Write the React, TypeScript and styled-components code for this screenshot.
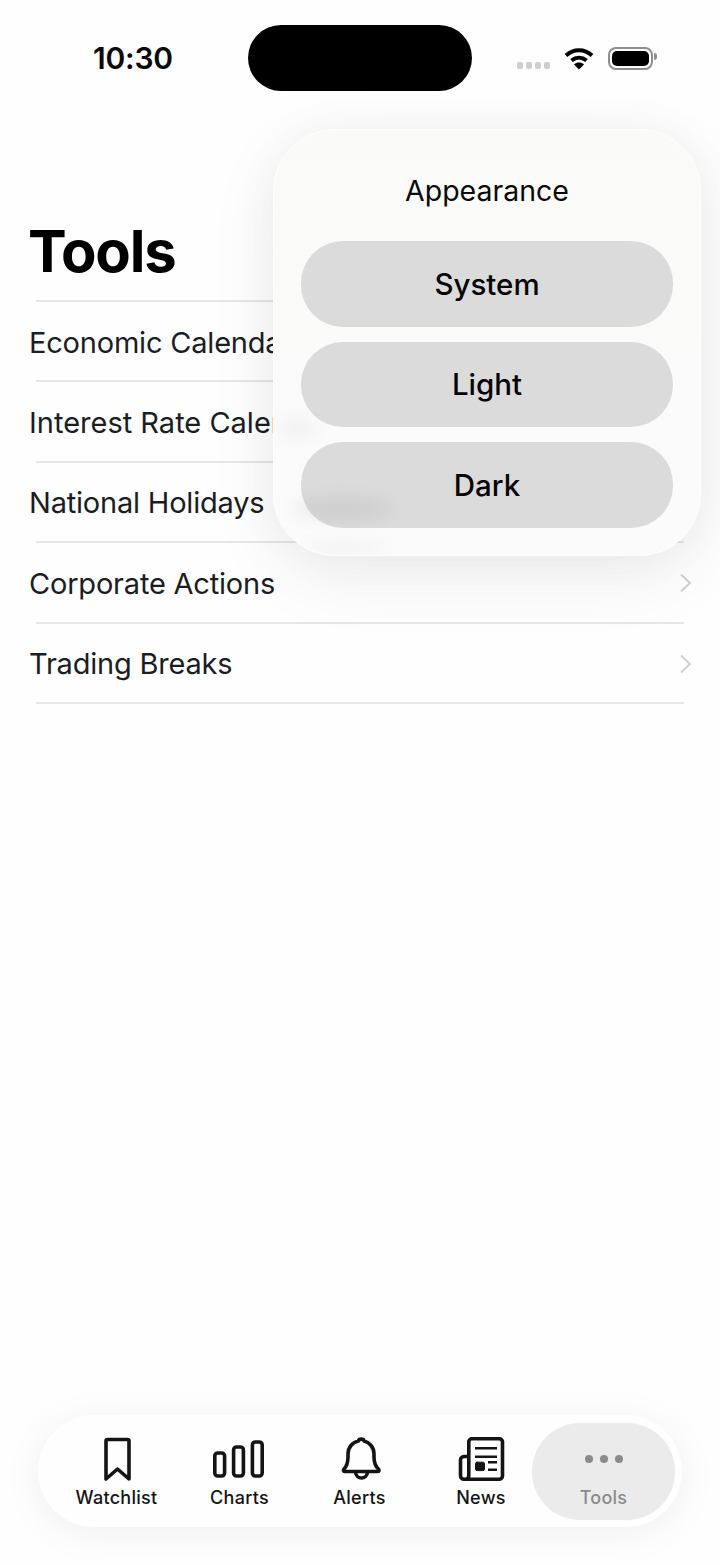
import React from 'react';
import styled, { createGlobalStyle } from 'styled-components';

const GlobalStyle = createGlobalStyle`
  html, body {
    margin: 0;
    padding: 0;
    background: #fefefe;
    font-family: Inter, "Liberation Sans", sans-serif;
  }
  * {
    box-sizing: border-box;
  }
`;

const Screen = styled.div`
  position: relative;
  width: 720px;
  height: 1565px;
  display: flex;
  flex-direction: column;
  overflow: hidden;
  background: #fefefe;
`;

const StatusBar = styled.div`
  display: grid;
  grid-template-columns: 1fr 224px 1fr;
  align-items: center;
  height: 66px;
  margin-top: 25px;
`;

const Clock = styled.div`
  padding-left: 93px;
  font-size: 30px;
  font-weight: 600;
  color: #0a0a0a;
  letter-spacing: -0.2px;
`;

const Island = styled.div`
  height: 66px;
  border-radius: 33px;
  background: #000;
`;

const StatusIcons = styled.div`
  display: flex;
  align-items: center;
  padding-left: 45px;
`;

const SignalDots = styled.div`
  display: flex;
  gap: 3px;
  margin-top: 15px;
  margin-right: 14px;
`;

const SignalDot = styled.span`
  width: 6px;
  height: 7px;
  border-radius: 2px;
  background: #cfcfcf;
`;

const Battery = styled.div`
  position: relative;
  width: 45px;
  height: 23px;
  margin-left: 14px;
  padding: 2px;
  border: 2px solid #8e8e8e;
  border-radius: 8px;

  &::before {
    content: '';
    display: block;
    width: 100%;
    height: 100%;
    background: #000;
    border-radius: 5px;
  }

  &::after {
    content: '';
    position: absolute;
    top: 4px;
    right: -6px;
    width: 3px;
    height: 7px;
    background: #8e8e8e;
    border-radius: 0 3px 3px 0;
  }
`;

const Title = styled.h1`
  margin: 0;
  padding: 125px 28px 0;
  font-size: 58px;
  line-height: 70px;
  font-weight: 700;
  letter-spacing: -1.2px;
  color: #000;
`;

const List = styled.div`
  display: flex;
  flex-direction: column;
  margin-top: 14px;
`;

const Row = styled.div`
  display: flex;
  align-items: center;
  justify-content: space-between;
  position: relative;
  height: 80.4px;
  padding: 4px 28px 0 29px;
  font-size: 29px;
  letter-spacing: -0.2px;
  color: #1c1c24;

  &:nth-child(2) {
    letter-spacing: 0;
  }

  &::before {
    content: '';
    position: absolute;
    top: 0;
    left: 36px;
    right: 36px;
    height: 2px;
    background: #e6e6e6;
  }
`;

const EndRule = styled.div`
  height: 2px;
  margin: 0 36px;
  background: #e6e6e6;
`;

const Popover = styled.div`
  position: absolute;
  top: 129px;
  left: 273px;
  width: 428px;
  height: 427px;
  padding: 0 27px;
  display: flex;
  flex-direction: column;
  border: 1px solid #fefefe;
  border-radius: 62px;
  background: linear-gradient(#fafaf9, #fbfbfb);
  box-shadow: 0 20px 70px rgba(0, 0, 0, 0.07), 0 0 50px rgba(0, 0, 0, 0.035);
  overflow: hidden;
`;

const PopoverTitle = styled.div`
  height: 111px;
  padding-top: 43px;
  font-size: 28.5px;
  line-height: 36px;
  text-align: center;
  color: #0a0a0a;
`;

const OptionList = styled.div`
  position: relative;
  display: flex;
  flex-direction: column;
  gap: 15px;
`;

const Option = styled.div`
  display: flex;
  align-items: center;
  justify-content: center;
  height: 85.5px;
  border-radius: 42px;
  background: #dbdbdb;
  font-size: 29.5px;
  font-weight: 500;
  color: #050505;
`;

const Smudge = styled.div<{ $top: number; $left: number; $width: number; $height: number; $alpha: number }>`
  position: absolute;
  top: ${p => p.$top}px;
  left: ${p => p.$left}px;
  width: ${p => p.$width}px;
  height: ${p => p.$height}px;
  border-radius: 50%;
  background: rgba(0, 0, 0, ${p => p.$alpha});
  filter: blur(8px);
`;

const TabBar = styled.div`
  display: grid;
  grid-template-columns: 147px 99px 141px 102px 143px;
  align-items: center;
  width: 644px;
  height: 112px;
  margin: auto 0 38px 38px;
  padding: 0 7px 0 5px;
  border-radius: 56px;
  background: #fefefe;
  box-shadow: 0 6px 40px rgba(0, 0, 0, 0.06);
`;

const Tab = styled.div<{ $active?: boolean }>`
  display: flex;
  flex-direction: column;
  align-items: center;
  height: 97px;
  padding-top: 14px;
  border-radius: 48px;
  background: ${p => (p.$active ? '#ebebeb' : 'transparent')};
  color: ${p => (p.$active ? '#8a8a8a' : '#141414')};
`;

const TabIcon = styled.svg`
  display: block;
  width: 52px;
  height: 46px;
  overflow: visible;
  fill: none;
  stroke: currentColor;
  stroke-width: 3.6;
  stroke-linecap: round;
  stroke-linejoin: round;
`;

const TabLabel = styled.span`
  margin-top: 4px;
  font-size: 18px;
  line-height: 22px;
  font-weight: 500;
  letter-spacing: 0.27px;
`;

const Chevron = () => (
  <svg width="13" height="20" viewBox="0 0 13 20" fill="none" stroke="#cfcfcf" strokeWidth="1.8">
    <path d="M2 1.5 L11 10 L2 18.5" />
  </svg>
);

const rows = ['Economic Calendar', 'Interest Rate Calendar', 'National Holidays', 'Corporate Actions', 'Trading Breaks'];

const App: React.FC = () => {
  return (
    <Screen>
      <GlobalStyle />
      <StatusBar>
        <Clock>10:30</Clock>
        <Island />
        <StatusIcons>
          <SignalDots>
            <SignalDot />
            <SignalDot />
            <SignalDot />
            <SignalDot />
          </SignalDots>
          <svg width="30" height="23" viewBox="0 0 30 23" fill="none" stroke="#000" strokeWidth="4">
            <path d="M2 8.5 C9.5 1.5 20.5 1.5 28 8.5" />
            <path d="M7.5 13.5 C12 9.8 18 9.8 22.5 13.5" />
            <path d="M15 22.5 L10 17.4 C13 15 17 15 20 17.4 Z" fill="#000" stroke="none" />
          </svg>
          <Battery />
        </StatusIcons>
      </StatusBar>

      <Title>Tools</Title>
      <List>
        {rows.map(row => (
          <Row key={row}>
            {row}
            <Chevron />
          </Row>
        ))}
        <EndRule />
      </List>

      <Popover>
        <PopoverTitle>Appearance</PopoverTitle>
        <OptionList>
          <Option>System</Option>
          <Option>Light</Option>
          <Option>Dark</Option>
        </OptionList>
        <Smudge $top={288} $left={4} $width={40} $height={20} $alpha={0.035} />
        <Smudge $top={368} $left={18} $width={100} $height={22} $alpha={0.06} />
        <Smudge $top={414} $left={30} $width={84} $height={6} $alpha={0.07} />
      </Popover>

      <TabBar>
        <Tab>
          <TabIcon viewBox="0 0 52 46">
            <path d="M15 4 a1.5 1.5 0 0 1 1.5 -1.5 h20 a1.5 1.5 0 0 1 1.5 1.5 V42 L26.5 32 L15 42 Z" />
          </TabIcon>
          <TabLabel>Watchlist</TabLabel>
        </Tab>
        <Tab>
          <TabIcon viewBox="0 0 52 46">
            <rect x="0.8" y="16" width="9.8" height="23" rx="3" />
            <rect x="19.6" y="10" width="9.8" height="29" rx="3" />
            <rect x="38.4" y="5" width="9.8" height="34" rx="3" />
          </TabIcon>
          <TabLabel>Charts</TabLabel>
        </Tab>
        <Tab>
          <TabIcon viewBox="0 0 52 46">
            <path d="M10 32 C13 29 14 25 14 20 V17 C14 10 19 5 24.5 4 C25 1.5 29.5 1.5 30 4 C35 5 40 10 40 17 V20 C40 25 41 29 44.5 32 C45.5 33.5 45 34.5 44 34.5 H10.5 C9.5 34.5 9 33.5 10 32 Z" />
            <path d="M21.5 35 C22 43 33 43 33.5 35" />
          </TabIcon>
          <TabLabel>Alerts</TabLabel>
        </Tab>
        <Tab>
          <TabIcon viewBox="0 0 52 46">
            <path d="M13.8 19.5 H9 a3.5 3.5 0 0 0 -3.5 3.5 V38.7 a3.5 3.5 0 0 0 3.5 3.5 H44 a3.5 3.5 0 0 0 3.5 -3.5 V4.8 a3 3 0 0 0 -3 -3 H16.8 a3 3 0 0 0 -3 3 V38.7 a3.5 3.5 0 0 1 -3.5 3.5" />
            <path d="M20 11.3 H42 M20 19.7 H42 M33 25.3 H42 M33 32.7 H42" strokeWidth="2.4" strokeLinecap="butt" />
            <rect x="20.5" y="25.2" width="9" height="8.4" rx="1.5" fill="currentColor" strokeWidth="1" />
          </TabIcon>
          <TabLabel>News</TabLabel>
        </Tab>
        <Tab $active>
          <TabIcon viewBox="0 0 52 46">
            <circle cx="11" cy="22" r="4" fill="currentColor" stroke="none" />
            <circle cx="26" cy="22" r="4" fill="currentColor" stroke="none" />
            <circle cx="41" cy="22" r="4" fill="currentColor" stroke="none" />
          </TabIcon>
          <TabLabel>Tools</TabLabel>
        </Tab>
      </TabBar>
    </Screen>
  );
};

export default App;
